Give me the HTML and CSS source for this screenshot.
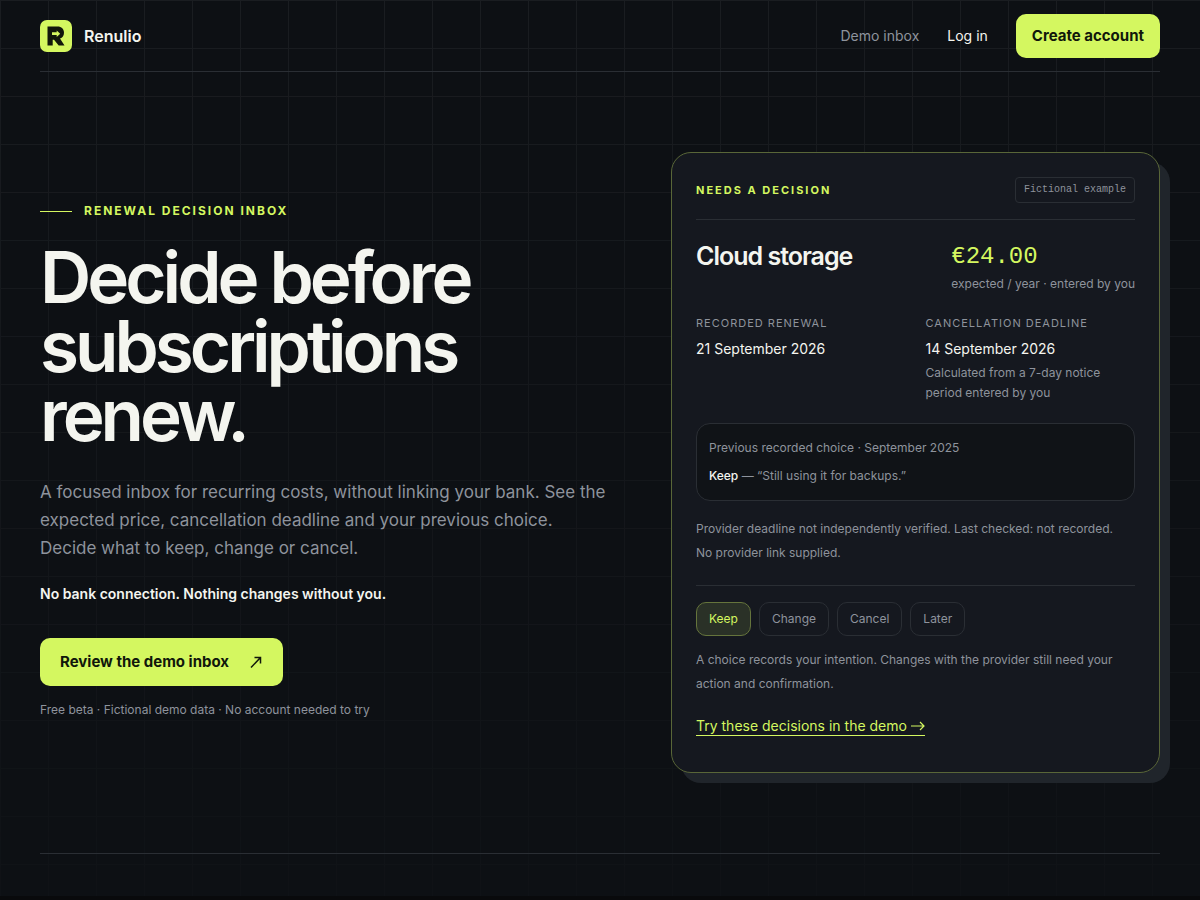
FILE: index.html
```html
<!DOCTYPE html>
<html lang="en">
<head>
<meta charset="utf-8">
<meta name="viewport" content="width=device-width, initial-scale=1">
<title>Renulio</title>
<link rel="stylesheet" href="styles.css">
</head>
<body>
<div class="page">
  <header class="header">
    <a class="brand" href="#">
      <svg class="brand-mark" viewBox="0 0 32 32" aria-hidden="true">
        <rect width="32" height="32" rx="7" fill="#d4f760"/>
        <path fill="#11170b" fill-rule="evenodd" d="M7.500 6.500H17.500C21.500 6.500 24 9 24 12.700C24 15.600 22.500 17.700 20 18.600L24.500 25.500H18.700L14 19.700H12.700V25.500H7.500ZM12 12.300V15H16.700V17L20.200 13.700L16.700 10.500V12.300Z"/>
      </svg>
      <span>Renulio</span>
    </a>
    <nav class="nav">
      <a class="nav-link muted" href="#">Demo inbox</a>
      <a class="nav-link" href="#">Log in</a>
      <a class="button" href="#">Create account</a>
    </nav>
  </header>

  <main class="hero">
    <section class="intro">
      <p class="eyebrow">Renewal decision inbox</p>
      <h1>Decide before subscriptions renew.</h1>
      <p class="lead">A focused inbox for recurring costs, without linking your bank. See the expected price, cancellation deadline and your previous choice.<br>Decide what to keep, change or cancel.</p>
      <p class="promise">No bank connection. Nothing changes without you.</p>
      <a class="button button-large" href="#">
        <span>Review the demo inbox</span>
        <svg class="arrow" viewBox="0 0 14 14" aria-hidden="true"><path d="M2 12.500L11.500 2.500M5.500 2.500H11.500V8.500" fill="none" stroke="currentColor" stroke-width="1.500"/></svg>
      </a>
      <p class="note">Free beta · Fictional demo data · No account needed to try</p>
    </section>

    <article class="card">
      <div class="card-head">
        <p class="status">Needs a decision</p>
        <span class="tag">Fictional example</span>
      </div>
      <div class="item">
        <h2>Cloud storage</h2>
        <div>
          <p class="price">€24.00</p>
          <p class="small">expected / year · entered by you</p>
        </div>
      </div>
      <dl class="dates">
        <div>
          <dt>Recorded renewal</dt>
          <dd>21 September 2026</dd>
        </div>
        <div>
          <dt>Cancellation deadline</dt>
          <dd>14 September 2026</dd>
          <dd class="small">Calculated from a 7-day notice period entered by you</dd>
        </div>
      </dl>
      <div class="previous">
        <p>Previous recorded choice · September 2025</p>
        <p><strong>Keep</strong> — “Still using it for backups.”</p>
      </div>
      <p class="fine">Provider deadline not independently verified. Last checked: not recorded.<br>No provider link supplied.</p>
      <div class="choices">
        <button class="choice selected" type="button">Keep</button>
        <button class="choice" type="button">Change</button>
        <button class="choice" type="button">Cancel</button>
        <button class="choice" type="button">Later</button>
      </div>
      <p class="fine">A choice records your intention. Changes with the provider still need your action and confirmation.</p>
      <a class="demo-link" href="#"><span>Try these decisions in the demo
        <svg class="arrow-right" viewBox="0 0 14 10" aria-hidden="true"><path d="M0 5H13M9 1L13 5L9 9" fill="none" stroke="currentColor" stroke-width="1.200"/></svg></span></a>
    </article>
  </main>
</div>
</body>
</html>
```
FILE: styles.css
```css
* {
  box-sizing: border-box;
}

:root {
  --lime: #d4f760;
  --muted: #8e939c;
  --text: #f4f5ef;
  --line: #2a2e34;
}

body {
  margin: 0;
  background: #090a0c;
  color: var(--text);
  font-family: Inter, "Liberation Sans", sans-serif;
  font-size: 14px;
  line-height: 20px;
}

h1, h2, p, dl, dd {
  margin: 0;
}

a {
  color: inherit;
  text-decoration: none;
}

.page {
  position: relative;
  isolation: isolate;
  padding: 0 40px 42px;
  background: #0d1014;
}

.page::before {
  content: "";
  position: absolute;
  inset: 0;
  z-index: -1;
  background-image:
    linear-gradient(#1a1d21 1px, transparent 1px),
    linear-gradient(90deg, #1a1d21 1px, transparent 1px);
  background-size: 48px 48px;
  mask-image: linear-gradient(#000, rgba(0, 0, 0, 0.2));
}

.header {
  display: flex;
  align-items: center;
  justify-content: space-between;
  height: 72px;
  border-bottom: 1px solid var(--line);
}

.brand {
  display: flex;
  align-items: center;
  gap: 12px;
  font-size: 16px;
  font-weight: 600;
}

.brand-mark {
  width: 32px;
  height: 32px;
}

.nav {
  display: flex;
  align-items: center;
  gap: 28px;
}

.muted {
  color: var(--muted);
}

.button {
  display: inline-flex;
  align-items: center;
  height: 44px;
  padding: 0 16px;
  border-radius: 10px;
  background: var(--lime);
  color: #11170b;
  font-size: 15px;
  font-weight: 700;
}

.hero {
  display: grid;
  grid-template-columns: 571fr 489fr;
  align-items: center;
  gap: 60px;
  padding: 80px 0;
  border-bottom: 1px solid var(--line);
}

.eyebrow {
  display: flex;
  align-items: center;
  gap: 12px;
  color: var(--lime);
  font-size: 12px;
  font-weight: 700;
  letter-spacing: 2px;
  text-transform: uppercase;
}

.eyebrow::before {
  content: "";
  width: 32px;
  height: 1px;
  background: var(--lime);
}

h1 {
  margin-top: 22px;
  max-width: 520px;
  font-size: 71px;
  line-height: 69px;
  font-weight: 600;
  letter-spacing: -4px;
}

.lead {
  margin-top: 28px;
  color: var(--muted);
  font-size: 17px;
  line-height: 28px;
}

.promise {
  margin-top: 20px;
  line-height: 24px;
  font-weight: 600;
}

.button-large {
  gap: 20px;
  height: 48px;
  margin-top: 32px;
  padding: 0 20px;
}

.arrow {
  width: 14px;
  height: 14px;
}

.note {
  margin-top: 12px;
  padding-bottom: 2px;
  color: var(--muted);
  font-size: 12px;
  line-height: 24px;
}

.card {
  padding: 24px;
  border: 1px solid #596638;
  border-radius: 20px;
  background: #15181f;
  box-shadow: 10px 10px 0 #20252b;
}

.card-head {
  display: flex;
  align-items: center;
  justify-content: space-between;
  padding-bottom: 16px;
  border-bottom: 1px solid var(--line);
}

.status {
  color: var(--lime);
  font-size: 11px;
  font-weight: 700;
  letter-spacing: 2px;
  text-transform: uppercase;
}

.tag {
  padding: 4px 8px;
  border: 1px solid var(--line);
  border-radius: 4px;
  color: var(--muted);
  font-family: "Liberation Mono", monospace;
  font-size: 10px;
  line-height: 16px;
}

.item {
  display: flex;
  justify-content: space-between;
  gap: 20px;
  margin-top: 20px;
}

h2 {
  font-size: 25px;
  line-height: 32px;
  font-weight: 600;
  letter-spacing: -1px;
}

.price {
  color: var(--lime);
  font-family: "Liberation Mono", monospace;
  font-size: 24px;
  line-height: 34px;
}

.small {
  color: var(--muted);
  font-size: 12px;
  line-height: 20px;
}

.dates {
  display: grid;
  grid-template-columns: 1fr 1fr;
  gap: 20px;
  margin-top: 20px;
}

dt {
  color: var(--muted);
  font-size: 11px;
  line-height: 18px;
  letter-spacing: 1px;
  text-transform: uppercase;
}

dd {
  margin-top: 5px;
  line-height: 24px;
}

dd.small {
  margin-top: 2px;
  line-height: 20px;
}

.previous {
  display: grid;
  gap: 4px;
  margin-top: 20px;
  padding: 12px;
  border: 1px solid var(--line);
  border-radius: 14px;
  background: #101317;
  color: var(--muted);
  font-size: 12px;
  line-height: 24px;
}

.previous strong {
  color: var(--text);
  font-weight: 500;
}

.fine {
  color: var(--muted);
  font-size: 12px;
  line-height: 24px;
}

.previous + .fine {
  margin-top: 16px;
}

.choices {
  display: flex;
  flex-wrap: wrap;
  gap: 8px;
  margin: 20px 0 12px;
  padding-top: 16px;
  border-top: 1px solid var(--line);
}

.choice {
  height: 34px;
  padding: 0 12px;
  border: 1px solid var(--line);
  border-radius: 10px;
  background: transparent;
  color: var(--muted);
  font: inherit;
  font-size: 12px;
}

.selected {
  border-color: #65743c;
  background: #2a3127;
  color: var(--lime);
}

.demo-link {
  display: flex;
  align-items: center;
  width: fit-content;
  height: 44px;
  margin-top: 8px;
  color: var(--lime);
}

.demo-link span {
  border-bottom: 1px solid var(--lime);
  line-height: 18px;
}

.arrow-right {
  width: 14px;
  height: 10px;
}
```
